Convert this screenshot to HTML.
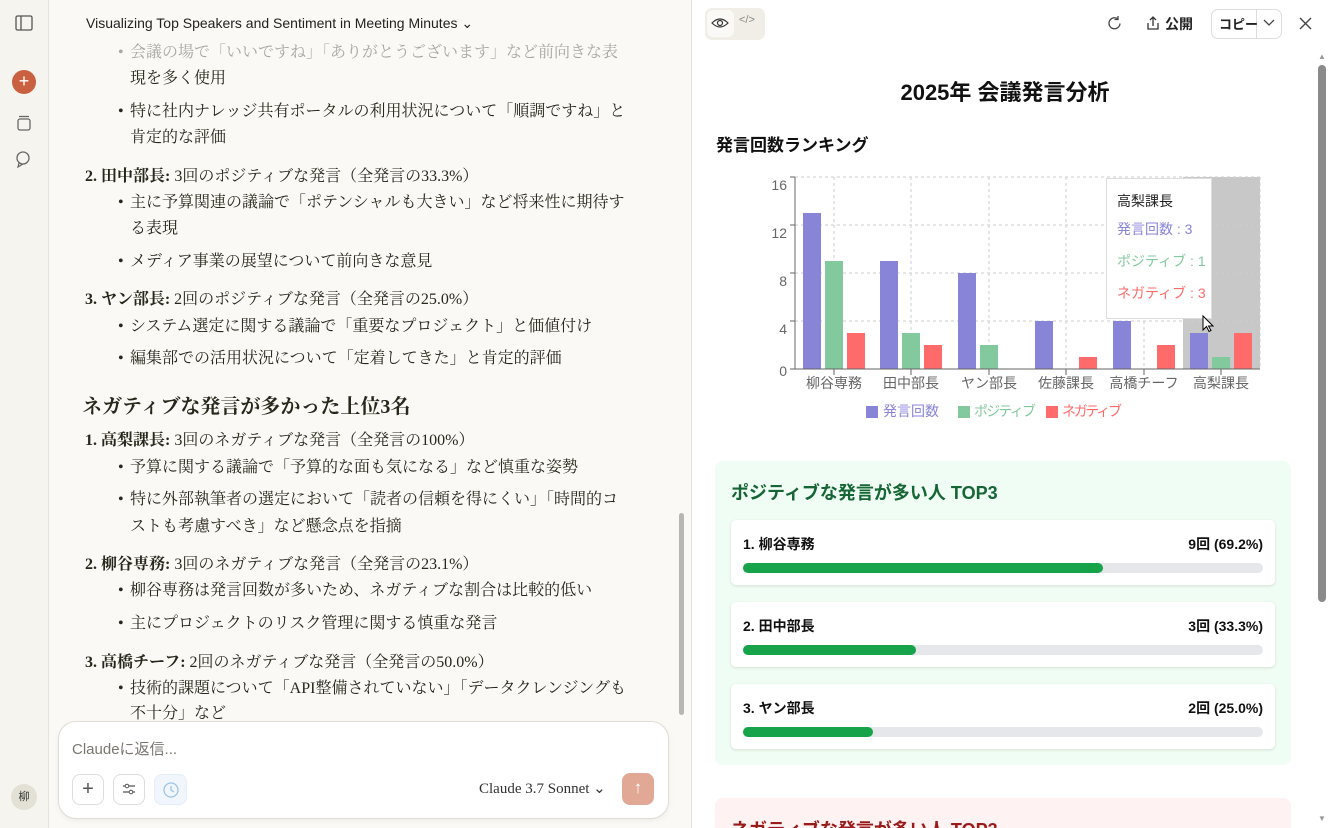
<!DOCTYPE html>
<html><head><meta charset="utf-8"><style>
*{box-sizing:border-box;margin:0;padding:0}
html,body{width:1330px;height:828px;overflow:hidden}
body{position:relative;background:#fff;font-family:"Liberation Sans","Noto Sans CJK JP",sans-serif}
.a{position:absolute;white-space:nowrap}
#side{left:0;top:0;width:49px;height:828px;background:#f5f4ef;border-right:1px solid #e5e3dc}
#left{left:49px;top:0;width:643px;height:828px;background:#faf9f5;border-right:1px solid #e2e0d9}
.t{position:absolute;font-family:"Liberation Serif","Noto Serif CJK JP",serif;font-size:16px;line-height:24px;color:#29261b;white-space:nowrap}
.b::before{content:"•";position:absolute;left:-12px}
.card{position:absolute;left:731px;width:544px;height:65px;background:#fff;border-radius:5px;box-shadow:0 1px 3px rgba(0,0,0,.12)}
.card .n{position:absolute;left:12px;top:14px;font-size:14px;font-weight:bold;color:#111}
.card .v{position:absolute;right:12px;top:14px;font-size:14px;font-weight:bold;color:#111}
.card .bg{position:absolute;left:12px;right:12px;top:43px;height:10px;border-radius:5px;background:#e5e7eb}
.card .fg{height:10px;border-radius:5px;background:#16a34a}
</style></head><body>
<div class="a" id="side"></div>
<svg class="a" style="left:15px;top:15px" width="18" height="16" viewBox="0 0 18 16"><rect x="1" y="1" width="16" height="14" rx="1.5" fill="none" stroke="#555" stroke-width="1.3"/><line x1="6" y1="1" x2="6" y2="15" stroke="#555" stroke-width="1.3"/></svg>
<div class="a" style="left:12px;top:70px;width:24px;height:24px;border-radius:12px;background:#c9603f;color:#fff;text-align:center;line-height:23px;font-size:18px">+</div>
<svg class="a" style="left:16px;top:114px" width="16" height="18" viewBox="0 0 16 18"><rect x="2" y="5" width="12" height="11" rx="2" fill="none" stroke="#666" stroke-width="1.3"/><line x1="3" y1="2.5" x2="13" y2="2.5" stroke="#666" stroke-width="1.3"/></svg>
<svg class="a" style="left:15px;top:150px" width="18" height="18" viewBox="0 0 18 18"><circle cx="8" cy="8" r="6" fill="none" stroke="#666" stroke-width="1.3"/><path d="M4 13 L3 17 L8 14" fill="none" stroke="#666" stroke-width="1.2"/></svg>
<div class="a" style="left:11px;top:784px;width:26px;height:26px;border-radius:13px;background:#e3e0d6;font-size:11px;text-align:center;line-height:26px;color:#333">柳</div>

<div class="a" id="left"></div>
<div class="a" style="left:86px;top:15px;font-size:14px;color:#222">Visualizing Top Speakers and Sentiment in Meeting Minutes ⌄</div>
<div class="t b" style="left:130px;top:41px;color:#aaa6a0">会議の場で「いいですね」「ありがとうございます」など前向きな表</div>
<div class="t" style="left:130px;top:67px">現を多く使用</div>
<div class="t b" style="left:130px;top:100px">特に社内ナレッジ共有ポータルの利用状況について「順調ですね」と</div>
<div class="t" style="left:130px;top:126px">肯定的な評価</div>
<div class="t" style="left:85px;top:165px"><b>2. 田中部長:</b> 3回のポジティブな発言（全発言の33.3%）</div>
<div class="t b" style="left:130px;top:191px">主に予算関連の議論で「ポテンシャルも大きい」など将来性に期待す</div>
<div class="t" style="left:130px;top:217px">る表現</div>
<div class="t b" style="left:130px;top:250px">メディア事業の展望について前向きな意見</div>
<div class="t" style="left:85px;top:288px"><b>3. ヤン部長:</b> 2回のポジティブな発言（全発言の25.0%）</div>
<div class="t b" style="left:130px;top:315px">システム選定に関する議論で「重要なプロジェクト」と価値付け</div>
<div class="t b" style="left:130px;top:347px">編集部での活用状況について「定着してきた」と肯定的評価</div>
<div class="t" style="left:82px;top:393px;font-size:20px;line-height:28px;font-weight:bold">ネガティブな発言が多かった上位3名</div>
<div class="t" style="left:85px;top:429px"><b>1. 高梨課長:</b> 3回のネガティブな発言（全発言の100%）</div>
<div class="t b" style="left:130px;top:456px">予算に関する議論で「予算的な面も気になる」など慎重な姿勢</div>
<div class="t b" style="left:130px;top:488px">特に外部執筆者の選定において「読者の信頼を得にくい」「時間的コ</div>
<div class="t" style="left:130px;top:515px">ストも考慮すべき」など懸念点を指摘</div>
<div class="t" style="left:85px;top:553px"><b>2. 柳谷専務:</b> 3回のネガティブな発言（全発言の23.1%）</div>
<div class="t b" style="left:130px;top:579px">柳谷専務は発言回数が多いため、ネガティブな割合は比較的低い</div>
<div class="t b" style="left:130px;top:612px">主にプロジェクトのリスク管理に関する慎重な発言</div>
<div class="t" style="left:85px;top:651px"><b>3. 高橋チーフ:</b> 2回のネガティブな発言（全発言の50.0%）</div>
<div class="t b" style="left:130px;top:677px">技術的課題について「API整備されていない」「データクレンジングも</div>
<div class="t" style="left:130px;top:702px">不十分」など</div>
<div class="a" style="left:679px;top:513px;width:5px;height:202px;border-radius:3px;background:#b8b6b0"></div>
<div class="a" style="left:58px;top:721px;width:611px;height:98px;background:#fff;border:1px solid #e0ddd4;border-radius:18px;box-shadow:0 2px 6px rgba(0,0,0,.05)"></div>
<div class="a" style="left:72px;top:738px;font-size:15px;color:#7a7770">Claudeに返信...</div>
<div class="a" style="left:72px;top:774px;width:32px;height:31px;border:1px solid #ddd;border-radius:8px;text-align:center;line-height:29px;font-size:20px;color:#555">+</div>
<div class="a" style="left:113px;top:774px;width:32px;height:31px;border:1px solid #ddd;border-radius:8px"></div>
<svg class="a" style="left:122px;top:782px" width="14" height="14"><path d="M1 4h12M1 10h12" stroke="#555" stroke-width="1.2"/><circle cx="5" cy="4" r="1.8" fill="#fff" stroke="#555"/><circle cx="9" cy="10" r="1.8" fill="#fff" stroke="#555"/></svg>
<div class="a" style="left:154px;top:774px;width:33px;height:31px;border:1px solid #e3eef8;background:#f0f6fc;border-radius:8px"></div>
<svg class="a" style="left:161px;top:780px" width="20" height="20"><circle cx="10" cy="10" r="7" fill="none" stroke="#9fc3e3" stroke-width="1.3"/><path d="M10 6v4l3 2" fill="none" stroke="#9fc3e3" stroke-width="1.3"/></svg>
<div class="a" style="left:479px;top:779px;font-family:'Liberation Serif','Noto Serif CJK JP',serif;font-size:15px;color:#333">Claude 3.7 Sonnet ⌄</div>
<div class="a" style="left:622px;top:773px;width:32px;height:32px;border-radius:8px;background:#e1a896;color:#fff;text-align:center;line-height:30px;font-size:17px">↑</div>

<div class="a" style="left:705px;top:8px;width:60px;height:32px;border-radius:7px;background:#f0eee6"></div>
<div class="a" style="left:707px;top:10px;width:27px;height:27px;border-radius:6px;background:#faf9f5"></div>
<svg class="a" style="left:711px;top:16px" width="18" height="14"><path d="M1 7 Q9 -1 17 7 Q9 15 1 7Z" fill="none" stroke="#333" stroke-width="1.2"/><circle cx="9" cy="7" r="2.5" fill="none" stroke="#333" stroke-width="1.2"/></svg>
<div class="a" style="left:739px;top:14px;font-size:11px;color:#888">&lt;/&gt;</div>
<svg class="a" style="left:1106px;top:15px" width="17" height="17"><path d="M14 8.5A5.5 5.5 0 1 1 12 4" fill="none" stroke="#444" stroke-width="1.3"/><path d="M12 1v3.5h-3.5" fill="none" stroke="#444" stroke-width="1.3"/></svg>
<svg class="a" style="left:1146px;top:15px" width="14" height="16"><path d="M7 11V2M4 5l3-3 3 3M2 8v6h10V8" fill="none" stroke="#333" stroke-width="1.3"/></svg>
<div class="a" style="left:1165px;top:14px;font-size:14px;font-weight:bold;color:#222">公開</div>
<div class="a" style="left:1211px;top:9px;width:71px;height:30px;border:1px solid #ddd;border-radius:7px"></div>
<div class="a" style="left:1256px;top:10px;width:1px;height:28px;background:#ddd"></div>
<div class="a" style="left:1219px;top:14px;font-size:13px;font-weight:bold;color:#222">コピー</div>
<svg class="a" style="left:1263px;top:19px" width="12" height="8"><path d="M1 1l5 5 5-5" fill="none" stroke="#444" stroke-width="1.3"/></svg>
<svg class="a" style="left:1299px;top:17px" width="13" height="13"><path d="M1 1l11 11M12 1L1 12" stroke="#444" stroke-width="1.4"/></svg>
<div class="a" style="left:1318px;top:65px;width:8px;height:537px;border-radius:4px;background:#8a8a8a"></div>
<div class="a" style="left:1318px;top:52px;font-size:8px;color:#999">▲</div>
<div class="a" style="left:1318px;top:814px;font-size:8px;color:#999">▼</div>

<div class="a" style="left:692px;width:626px;top:75px;text-align:center;font-size:22px;font-weight:bold;color:#111">2025年 会議発言分析</div>
<div class="a" style="left:716px;top:131px;font-size:17px;font-weight:bold;color:#111">発言回数ランキング</div>

<svg class="a" style="left:0;top:0" width="1330" height="828" font-family="Liberation Sans,Noto Sans CJK JP,sans-serif">
<rect x="1183" y="177" width="77" height="192" fill="#c8c8c8"/>
<g stroke="#ccc" stroke-dasharray="3 3">
<line x1="795" y1="177" x2="1260" y2="177"/><line x1="795" y1="225" x2="1260" y2="225"/><line x1="795" y1="273" x2="1260" y2="273"/><line x1="795" y1="321" x2="1260" y2="321"/>
<line x1="834" y1="177" x2="834" y2="369"/><line x1="911" y1="177" x2="911" y2="369"/><line x1="989" y1="177" x2="989" y2="369"/><line x1="1066" y1="177" x2="1066" y2="369"/><line x1="1144" y1="177" x2="1144" y2="369"/><line x1="1260" y1="177" x2="1260" y2="369"/>
</g>
<g>
<rect x="803" y="213" width="18" height="156" fill="#8884d8"/><rect x="825" y="261" width="18" height="108" fill="#82ca9d"/><rect x="847" y="333" width="18" height="36" fill="#ff6b6b"/>
<rect x="880" y="261" width="18" height="108" fill="#8884d8"/><rect x="902" y="333" width="18" height="36" fill="#82ca9d"/><rect x="924" y="345" width="18" height="24" fill="#ff6b6b"/>
<rect x="958" y="273" width="18" height="96" fill="#8884d8"/><rect x="980" y="345" width="18" height="24" fill="#82ca9d"/>
<rect x="1035" y="321" width="18" height="48" fill="#8884d8"/><rect x="1079" y="357" width="18" height="12" fill="#ff6b6b"/>
<rect x="1113" y="321" width="18" height="48" fill="#8884d8"/><rect x="1157" y="345" width="18" height="24" fill="#ff6b6b"/>
<rect x="1190" y="333" width="18" height="36" fill="#8884d8"/><rect x="1212" y="357" width="18" height="12" fill="#82ca9d"/><rect x="1234" y="333" width="18" height="36" fill="#ff6b6b"/>
</g>
<g stroke="#666"><line x1="795" y1="177" x2="795" y2="369"/><line x1="795" y1="369" x2="1260" y2="369"/>
<line x1="790" y1="177" x2="795" y2="177"/><line x1="790" y1="225" x2="795" y2="225"/><line x1="790" y1="273" x2="795" y2="273"/><line x1="790" y1="321" x2="795" y2="321"/><line x1="790" y1="369" x2="795" y2="369"/>
<line x1="834" y1="369" x2="834" y2="375"/><line x1="911" y1="369" x2="911" y2="375"/><line x1="989" y1="369" x2="989" y2="375"/><line x1="1066" y1="369" x2="1066" y2="375"/><line x1="1144" y1="369" x2="1144" y2="375"/><line x1="1221" y1="369" x2="1221" y2="375"/></g>
<g fill="#666" font-size="14" text-anchor="end"><text x="787" y="190">16</text><text x="787" y="238">12</text><text x="787" y="286">8</text><text x="787" y="334">4</text><text x="787" y="376">0</text></g>
<g fill="#666" font-size="14" text-anchor="middle"><text x="834" y="388">柳谷専務</text><text x="911" y="388">田中部長</text><text x="989" y="388">ヤン部長</text><text x="1066" y="388">佐藤課長</text><text x="1144" y="388">高橋チーフ</text><text x="1221" y="388">高梨課長</text></g>
<rect x="866" y="406" width="12" height="12" fill="#8884d8"/><text x="883" y="416" font-size="14" fill="#8884d8">発言回数</text>
<rect x="958" y="406" width="12" height="12" fill="#82ca9d"/><text x="974" y="416" font-size="14" fill="#82ca9d" textLength="62">ポジティブ</text>
<rect x="1046" y="406" width="12" height="12" fill="#ff6b6b"/><text x="1062" y="416" font-size="14" fill="#ff6b6b" textLength="60">ネガティブ</text>
<rect x="1106.5" y="178.5" width="105" height="140" fill="#fff" stroke="#ddd"/>
<text x="1117" y="206" font-size="14" fill="#222">高梨課長</text>
<text x="1117" y="234" font-size="14" fill="#8884d8">発言回数 : 3</text>
<text x="1117" y="266" font-size="14" fill="#82ca9d">ポジティブ : 1</text>
<text x="1117" y="298" font-size="14" fill="#ff6b6b">ネガティブ : 3</text>
<path d="M1203 316v14l3.5-3.5 2.5 5 2-1-2.5-4.5h4.5z" fill="#fff" stroke="#000" stroke-width="1"/>
</svg>

<div class="a" style="left:715px;top:461px;width:576px;height:304px;border-radius:8px;background:#f0fdf4"></div>
<div class="a" style="left:731px;top:479px;font-size:18px;font-weight:bold;color:#166534">ポジティブな発言が多い人 TOP3</div>
<div class="card" style="top:520px"><div class="n">1. 柳谷専務</div><div class="v">9回 (69.2%)</div><div class="bg"><div class="fg" style="width:69.2%"></div></div></div>
<div class="card" style="top:602px"><div class="n">2. 田中部長</div><div class="v">3回 (33.3%)</div><div class="bg"><div class="fg" style="width:33.3%"></div></div></div>
<div class="card" style="top:684px"><div class="n">3. ヤン部長</div><div class="v">2回 (25.0%)</div><div class="bg"><div class="fg" style="width:25%"></div></div></div>
<div class="a" style="left:715px;top:798px;width:576px;height:30px;border-radius:8px 8px 0 0;background:#fef2f2;overflow:hidden"><div class="a" style="left:16px;top:18px;font-size:18px;font-weight:bold;color:#991b1b">ネガティブな発言が多い人 TOP3</div></div>
</body></html>
